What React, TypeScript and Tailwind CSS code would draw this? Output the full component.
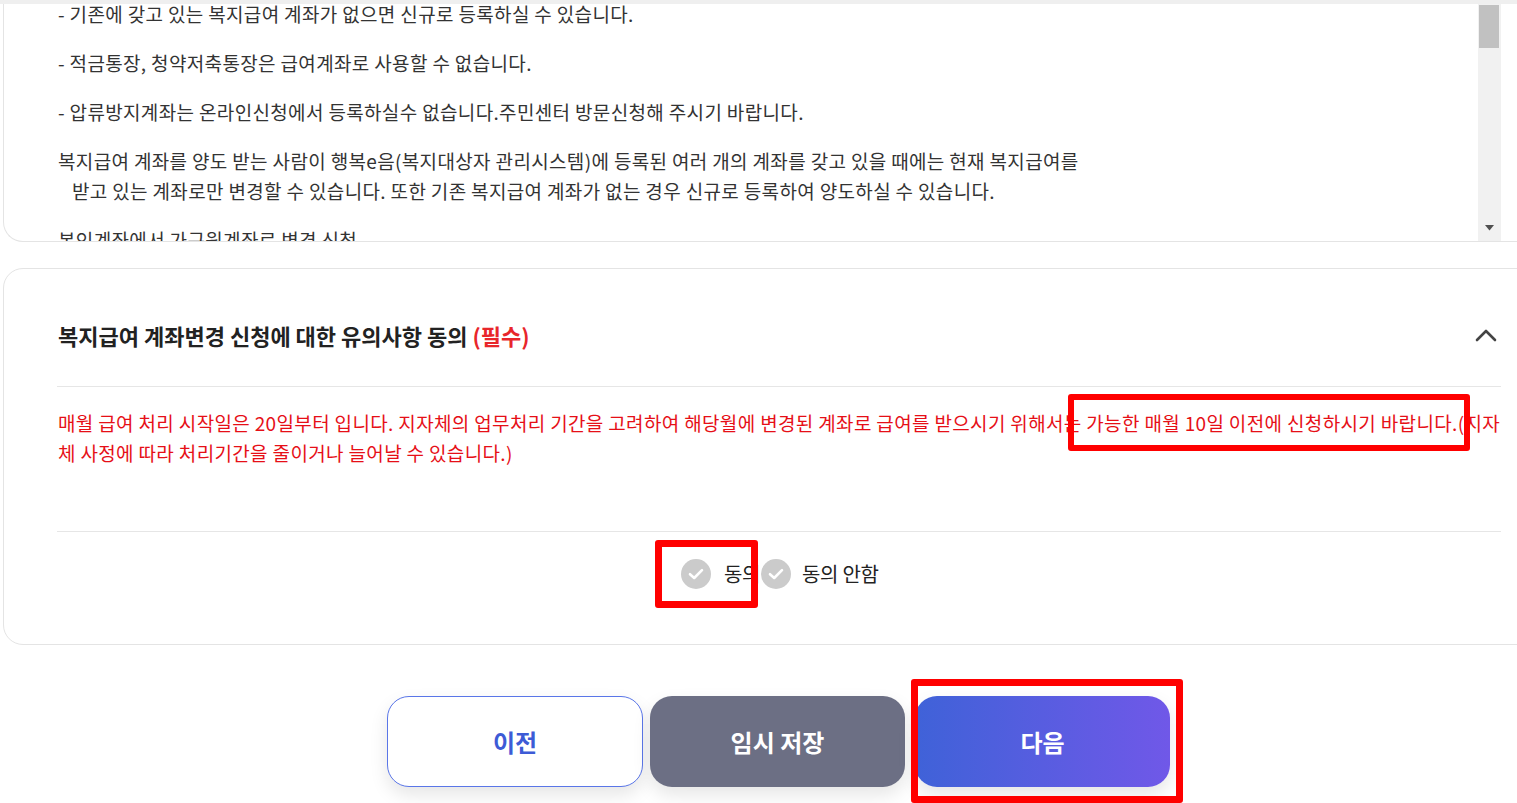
import React from "react";

const FONT = '"Noto Sans CJK KR", "Noto Sans", sans-serif';

function Check() {
  return (
    <span className="flex h-[30px] w-[30px] shrink-0 items-center justify-center rounded-full bg-[#cbcbcb]">
      <svg width="16" height="12" viewBox="0 0 16 12" fill="none">
        <path d="M2 6.2 L6.2 10 L14 2.2" stroke="#ffffff" strokeWidth="2.6" strokeLinecap="round" strokeLinejoin="round" />
      </svg>
    </span>
  );
}

export default function App() {
  return (
    <div className="relative h-[803px] w-[1517px] overflow-hidden bg-white" style={{ fontFamily: FONT }}>
      <div className="h-[4px] w-full bg-[#efefef]" />

      {/* top scrolling notice card */}
      <div className="ml-[3px] flex h-[238px] w-[1560px] overflow-hidden rounded-bl-[20px] border-b border-l border-[#e4e4e4] bg-white">
        <div className="w-[1474px] overflow-hidden pl-[54px] text-[19px] leading-[30px] tracking-[0.35px] text-[#333333]">
          <div className="-mt-[5px]">
            <p className="mb-[19px] whitespace-nowrap">- 기존에 갖고 있는 복지급여 계좌가 없으면 신규로 등록하실 수 있습니다.</p>
            <p className="mb-[19px] whitespace-nowrap">- 적금통장, 청약저축통장은 급여계좌로 사용할 수 없습니다.</p>
            <p className="mb-[19px] whitespace-nowrap">- 압류방지계좌는 온라인신청에서 등록하실수 없습니다.주민센터 방문신청해 주시기 바랍니다.</p>
            <p className="mb-[19px] whitespace-nowrap">
              복지급여 계좌를 양도 받는 사람이 행복e음(복지대상자 관리시스템)에 등록된 여러 개의 계좌를 갖고 있을 때에는 현재 복지급여를
              <br />
              <span className="pl-[14px]">받고 있는 계좌로만 변경할 수 있습니다. 또한 기존 복지급여 계좌가 없는 경우 신규로 등록하여 양도하실 수 있습니다.</span>
            </p>
            <p className="whitespace-nowrap">본인계좌에서 가구원계좌로 변경 신청</p>
          </div>
        </div>
        {/* scrollbar */}
        <div className="relative h-full w-[23px] shrink-0 bg-[#f1f1f1]">
          <div className="ml-[1px] mt-[1px] h-[43px] w-[20px] bg-[#c1c1c1]" />
          <svg className="absolute bottom-[10px] left-[7px]" width="9" height="6" viewBox="0 0 9 6">
            <path d="M0 0 H9 L4.5 5.5 Z" fill="#505050" />
          </svg>
        </div>
      </div>

      {/* agreement card */}
      <div className="ml-[3px] mt-[26px] w-[1560px] rounded-[20px] border border-[#e4e4e4] bg-white">
        <div className="flex w-[1493px] items-center justify-between pl-[54px] pt-[50px]">
          <h2 className="text-[22px] font-bold leading-[32px] tracking-[0px] text-[#222222]">
            복지급여 계좌변경 신청에 대한 유의사항 동의 <span className="text-[#e8262b]">(필수)</span>
          </h2>
          <svg width="22" height="14" viewBox="0 0 22 14" fill="none">
            <path d="M2 12 L11 3 L20 12" stroke="#444444" strokeWidth="2.6" strokeLinecap="round" strokeLinejoin="round" />
          </svg>
        </div>
        <div className="ml-[53px] mt-[35px] h-px w-[1444px] bg-[#e6e6e6]" />
        <div className="pl-[54px] pt-[21px] text-[19px] leading-[30px] tracking-[0.35px] text-[#e60f17]">
          <p className="whitespace-nowrap">
            매월 급여 처리 시작일은 20일부터 입니다. 지자체의 업무처리 기간을 고려하여 해당월에 변경된 계좌로 급여를 받으시기 위해서는 가능한 매월 10일 이전에 신청하시기 바랍니다.(지자
          </p>
          <p className="whitespace-nowrap">체 사정에 따라 처리기간을 줄이거나 늘어날 수 있습니다.)</p>
        </div>
        <div className="ml-[53px] mt-[63px] h-px w-[1444px] bg-[#e6e6e6]" />
        <div className="flex h-[84px] items-center pl-[677px] text-[20px] tracking-[-0.3px] text-[#222222]">
          <div className="flex items-center">
            <Check />
            <span className="ml-[13px] w-[37px] whitespace-nowrap">동의</span>
          </div>
          <div className="relative flex items-center">
            <Check />
            <span className="ml-[11px] whitespace-nowrap">동의 안함</span>
          </div>
        </div>
        <div className="h-[28px]" />
      </div>

      {/* buttons */}
      <div className="mt-[51px] flex pl-[387px]">
        <button className="flex h-[91px] w-[256px] items-center justify-center rounded-[22px] border border-[#5a76e8] bg-white text-[24px] font-bold text-[#3d5bd6] shadow-[0_8px_18px_rgba(0,0,0,0.10)]">
          이전
        </button>
        <button className="ml-[7px] flex h-[91px] w-[255px] items-center justify-center rounded-[22px] bg-[#6c6f84] text-[24px] font-bold text-white shadow-[0_8px_18px_rgba(0,0,0,0.10)]">
          임시 저장
        </button>
        <button className="ml-[10px] flex h-[91px] w-[255px] items-center justify-center rounded-[22px] bg-[linear-gradient(90deg,#3f62d8,#7058e8)] text-[24px] font-bold text-white shadow-[0_8px_18px_rgba(0,0,0,0.10)]">
          다음
        </button>
      </div>

      {/* red annotation boxes */}
      <div className="absolute left-[1068px] top-[394px] h-[57px] w-[402px] rounded-[3px] border-[6px] border-[#ff0000]" />
      <div className="absolute left-[655px] top-[540px] h-[68px] w-[103px] rounded-[3px] border-[7px] border-[#ff0000]" />
      <div className="absolute left-[911px] top-[679px] h-[124px] w-[272px] rounded-[3px] border-[7px] border-[#ff0000]" />
    </div>
  );
}
